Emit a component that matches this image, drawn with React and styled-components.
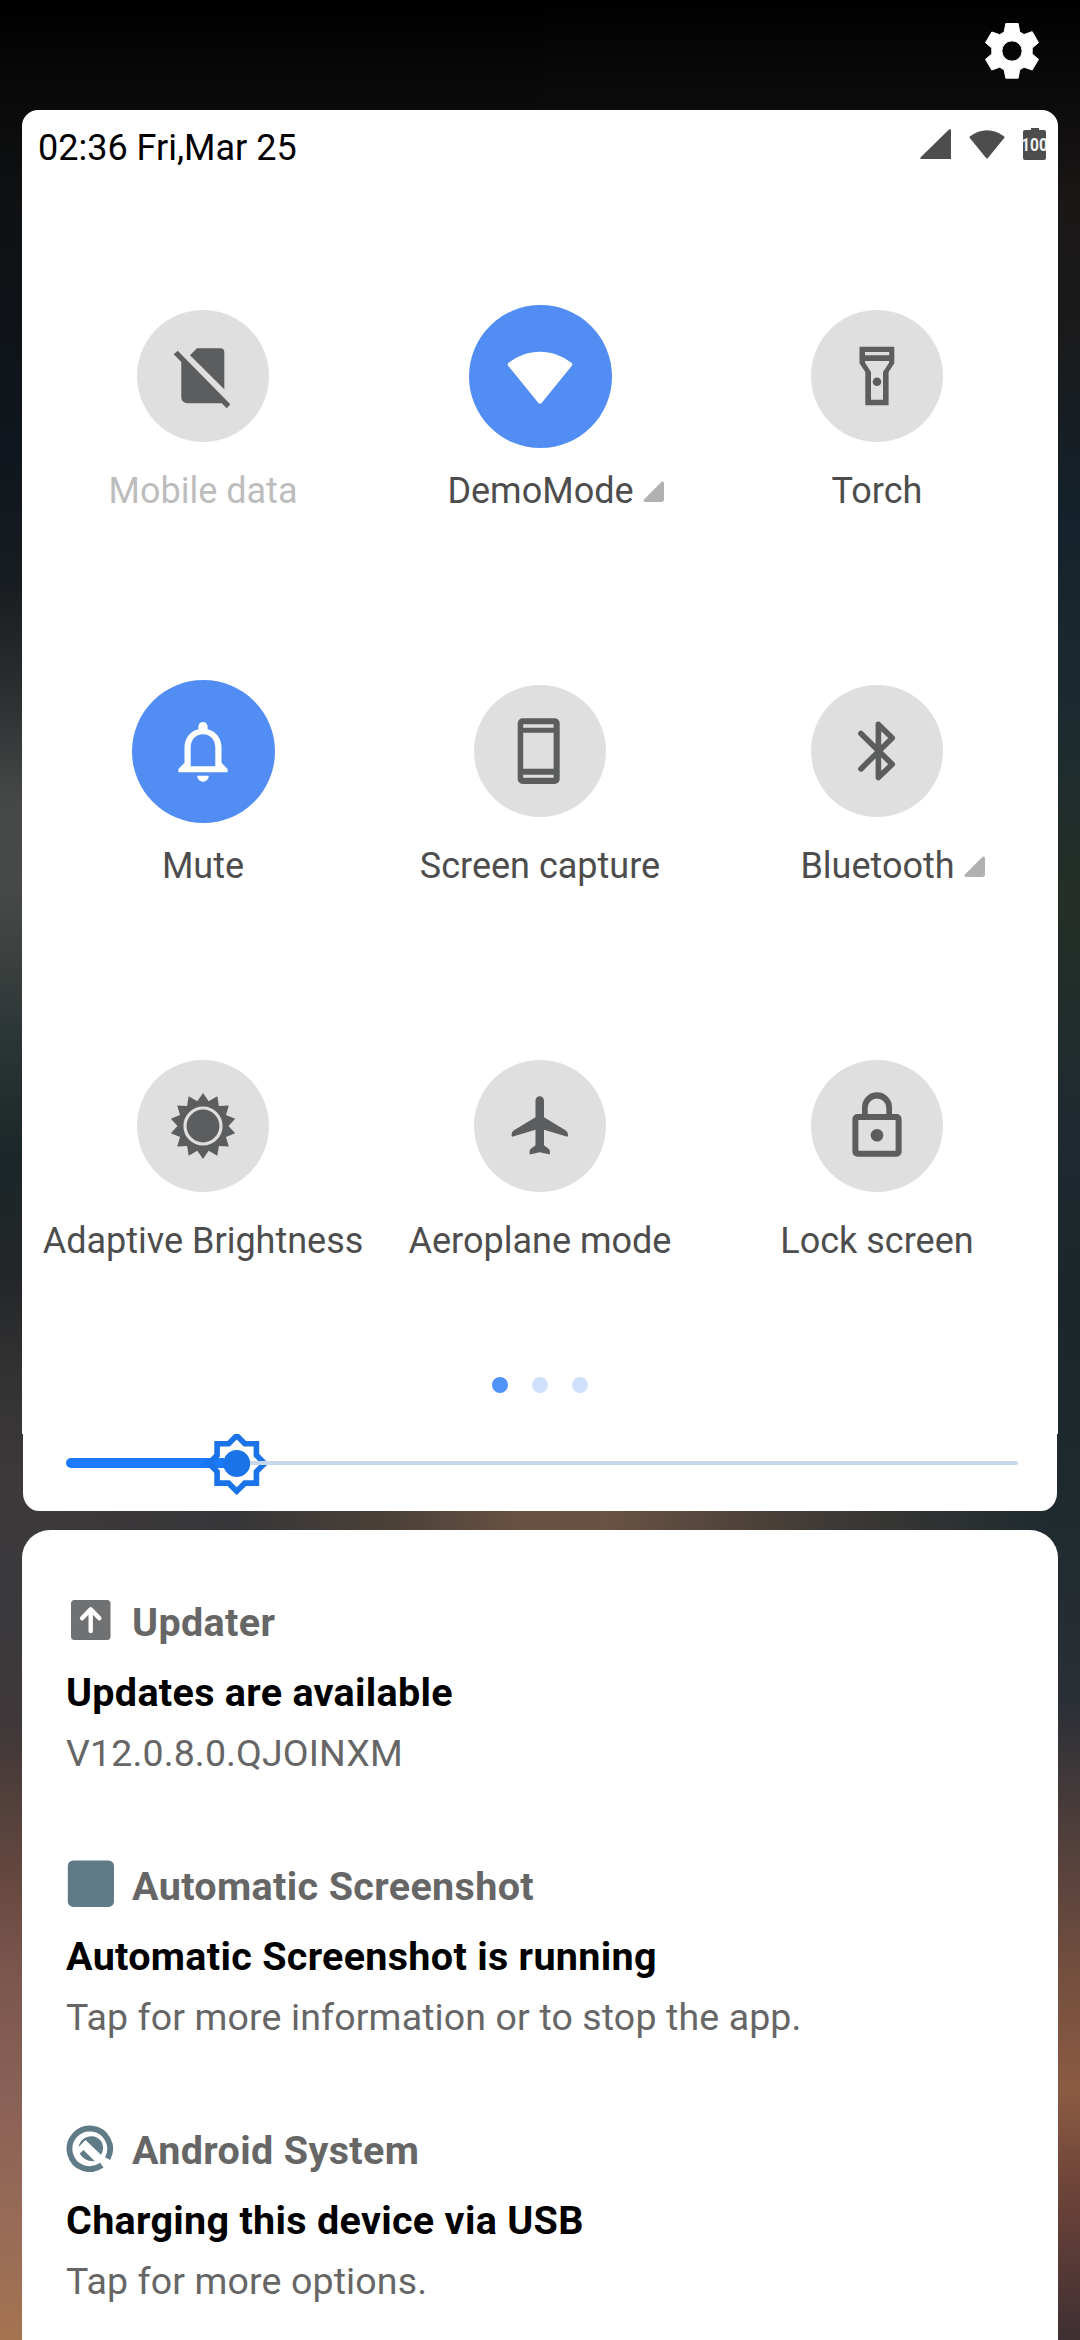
import React from "react";
import styled, { createGlobalStyle } from "styled-components";

const colorSet = {
  blue: "#528df4",
  sliderBlue: "#1a73e8",
  tileGrey: "#dfdfdf",
  iconGrey: "#5c5d5e",
  statusGrey: "#4d4d4d",
  textGrey: "#666666",
  teal: "#5f7b87",
};

// 14 pointed sun, tips at 33 and valleys at 25.5
const sunPoints = Array.from({ length: 28 }, (_, i) => {
  const radius = i % 2 === 0 ? 33 : 25.5;
  const angle = (i * Math.PI) / 14;
  const x = 36 + radius * Math.sin(angle);
  const y = 36 - radius * Math.cos(angle);
  return `${x.toFixed(2)},${y.toFixed(2)}`;
}).join(" ");

const SimOffIcon = () => (
  <>
    <path d="M30 8.3H53.3a4 4 0 0 1 4 4V49.3L23 15.3z" />
    <path d="M6.7 14.3 10.7 10.7 63.3 64.3 59.7 68.3 54.8 63.3H20.3a6 6 0 0 1-6-6V22z" />
  </>
);

const WifiIcon = () => (
  <path d="M37.6 62.9 68 25.6c.6-.9.6-1.8-.3-2.6C58 15.5 47 11.7 36 11.7S14 15.5 4.3 23c-.9.8-.9 1.7-.3 2.6L34.4 62.9c.9 1.1 2.3 1.1 3.2 0z" />
);

const TorchIcon = () => (
  <>
    <path
      fillRule="evenodd"
      d="M18.5 6.7H53.3V23.3L47.6 32V65.3H24.3V32L18.5 23.3zM24 12V15.3H48.2V12zM24 21V22.5L30 32V59.7H42V32L48.2 22.5V21z"
    />
    <circle cx="36" cy="41.7" r="4.3" />
  </>
);

const BellIcon = () => (
  <>
    <path
      fillRule="evenodd"
      d="M36 7a4.6 4.6 0 0 1 4.6 4.6v2.6C49.5 16.5 54.5 23.5 54.5 32.5V47.8L60.6 54V57.3H11.4V54L17.5 47.8V32.5C17.5 23.5 22.5 16.5 31.4 14.2V11.6A4.6 4.6 0 0 1 36 7zM36 19.3C28.5 19.3 23.7 25 23.7 32.5V51.3H48.3V32.5C48.3 25 43.5 19.3 36 19.3z"
    />
    <path d="M30.2 60.7h11.6a5.8 6 0 0 1-11.6 0z" />
  </>
);

const PhoneIcon = () => (
  <path
    fillRule="evenodd"
    d="M18.7 3.3H50.7a5 5 0 0 1 5 5V64a5 5 0 0 1-5 5H18.7a5 5 0 0 1-5-5V8.3a5 5 0 0 1 5-5zM19.2 9.3V12.7H49.6V9.3zM19.2 17.7V53.7H49.6V17.7zM19.2 59.7V62.7H49.6V59.7z"
  />
);

const BluetoothIcon = () => (
  <path
    d="M19.9 18.4 51.2 49.3 37.4 62.6V9.4L51.2 23 19.9 53.9"
    fill="none"
    stroke="currentColor"
    strokeWidth="5.6"
    strokeLinecap="round"
    strokeLinejoin="round"
  />
);

const SunIcon = () => (
  <>
    <polygon points={sunPoints} />
    <circle cx="36" cy="36" r="18" fill="none" stroke={colorSet.tileGrey} strokeWidth="3.2" />
  </>
);

const PlaneIcon = () => (
  <path d="M40 27.3 61.5 40.2C63.3 41.4 64 42.8 64 45.5 64 46.6 63.4 46.8 62.5 46.5L40 39.7V55.3L44.6 58.8C45.6 59.7 45.9 60.5 45.9 62.3V64.5L35.7 62.3 25.6 64.5V62.3C25.6 60.5 25.9 59.7 26.9 58.8L31.5 55.3V39.7L9 46.5C8.1 46.8 7.6 46.6 7.6 45.5 7.6 42.8 8.2 41.4 10 40.2L31.5 27.3V10.5A4.25 4.25 0 0 1 40 10.5z" />
);

const LockIcon = () => (
  <>
    <path
      fillRule="evenodd"
      d="M21 24V17.3a15 15 0 0 1 30 0V24H55.6a5 5 0 0 1 5 5V61.7a5 5 0 0 1-5 5H16.4a5 5 0 0 1-5-5V29a5 5 0 0 1 5-5zM26.7 24H45.3V17.8a9.3 9.3 0 0 0-18.6 0zM17.4 30V60.7H54.6V30z"
    />
    <circle cx="36" cy="45.3" r="6.3" />
  </>
);

const UpdaterIcon = () => (
  <svg width="48" height="48" viewBox="0 0 48 48">
    <rect x="5" y="4" width="39.5" height="40" rx="3.5" fill="#707173" />
    <path
      d="M24.7 35V14M16 22.3 24.7 13.4 33.4 22.3"
      fill="none"
      stroke="#fff"
      strokeWidth="4.4"
      strokeLinecap="round"
      strokeLinejoin="round"
    />
  </svg>
);

const ScreenshotIcon = () => (
  <svg width="48" height="48" viewBox="0 0 48 48">
    <rect x="1.8" y="0.5" width="46.2" height="46.4" rx="5.5" fill={colorSet.teal} />
  </svg>
);

const AndroidIcon = () => (
  <svg width="48" height="48" viewBox="0 0 48 48">
    <path
      d="M35.8 41.2A20.3 20.3 0 1 1 41.6 34.6"
      fill="none"
      stroke={colorSet.teal}
      strokeWidth="5.8"
    />
    <path
      d="M12.6 24.5A12.6 12.6 0 0 1 34.8 16.8C37.8 21.3 37.8 26.5 35 30.8L19.5 15.9z"
      fill={colorSet.teal}
    />
    <path d="M12.6 25.5 19 19.2 34 35.2" fill="none" stroke="#fff" strokeWidth="3.6" />
    <path d="M17.5 26 28.8 37.2C22.5 37.8 16.5 35 13.8 29.6z" fill={colorSet.teal} />
  </svg>
);

const tiles = [
  { label: "Mobile data", Icon: SimOffIcon, disabled: true },
  { label: "DemoMode", Icon: WifiIcon, active: true, expandable: true },
  { label: "Torch", Icon: TorchIcon },
  { label: "Mute", Icon: BellIcon, active: true },
  { label: "Screen capture", Icon: PhoneIcon },
  { label: "Bluetooth", Icon: BluetoothIcon, expandable: true },
  { label: "Adaptive Brightness", Icon: SunIcon },
  { label: "Aeroplane mode", Icon: PlaneIcon },
  { label: "Lock screen", Icon: LockIcon },
];

const notifications = [
  {
    app: "Updater",
    Icon: UpdaterIcon,
    title: "Updates are available",
    text: "V12.0.8.0.QJOINXM",
  },
  {
    app: "Automatic Screenshot",
    Icon: ScreenshotIcon,
    title: "Automatic Screenshot is running",
    text: "Tap for more information or to stop the app.",
  },
  {
    app: "Android System",
    Icon: AndroidIcon,
    title: "Charging this device via USB",
    text: "Tap for more options.",
  },
];

const Tile = ({ item }) => (
  <TileWrapper>
    <CircleSlot>
      <Circle $active={item.active}>
        <svg width="72" height="72" viewBox="0 0 72 72" fill="currentColor">
          <item.Icon />
        </svg>
      </Circle>
    </CircleSlot>
    <TileLabel $disabled={item.disabled}>
      {item.label}
      {item.expandable && (
        <ExpandMark viewBox="0 0 22 22">
          <path d="M19.5.7Q22 .2 22 2.5V19.5Q22 22 19.5 22H2.5Q-.6 21.7 1 19.3z" />
        </ExpandMark>
      )}
    </TileLabel>
  </TileWrapper>
);

const Notification = ({ item }) => (
  <NotificationItem>
    <AppRow>
      <item.Icon />
      <AppName>{item.app}</AppName>
    </AppRow>
    <Title>{item.title}</Title>
    <Text>{item.text}</Text>
  </NotificationItem>
);

const App = () => (
  <Page>
    <GlobalStyle />
    <TopBar>
      <svg width="56" height="56" viewBox="0 0 168 168">
        <path
          fill="#fff"
          stroke="#fff"
          strokeWidth="3"
          strokeLinejoin="round"
          fillRule="evenodd"
          d="M65.5 1.5H102.5L107 27 120 34.5 144.5 26 163.5 59 144.5 75V93L163.5 109 144.5 141 120 132.5 107 140.5 102.5 165.5H65.5L60.5 140.5 47 132.5 23.5 141 4.5 109 23.5 93V75L4.5 59 23.5 27 47 35 60.5 27zM84 53.5A30.5 30.5 0 1 0 84 114.5 30.5 30.5 0 1 0 84 53.5z"
        />
      </svg>
    </TopBar>

    <QuickPanel>
      <StatusRow>
        <Clock>02:36 Fri,Mar 25</Clock>
        <StatusIcons>
          <svg width="31" height="31" viewBox="0 0 31 31">
            <path d="M29 .6Q31 -.4 31 1.6V30H1.5Q-.6 30 .7 28.3z" fill={colorSet.statusGrey} />
          </svg>
          <svg width="36" height="31" viewBox="0 0 36 31">
            <path
              d="M18.7 29.3 35.4 8.7Q36 8 35 7.2 27 1.2 18 1.2T1 7.2Q0 8 .6 8.7L17.3 29.3Q18 30 18.7 29.3z"
              fill={colorSet.statusGrey}
            />
          </svg>
          <Battery>
            <BatteryCap />
            <BatteryBody>
              <BatteryLevel>100</BatteryLevel>
            </BatteryBody>
          </Battery>
        </StatusIcons>
      </StatusRow>

      <TileGrid>
        {tiles.map((item) => (
          <Tile key={item.label} item={item} />
        ))}
      </TileGrid>

      <Pager>
        <Dot $current />
        <Dot />
        <Dot />
      </Pager>
    </QuickPanel>

    <SliderPanel>
      <Filled />
      <Thumb viewBox="0.7 1.54 22.6 21.76">
        <path
          fillRule="evenodd"
          d="M20 8.69V4h-4.69L12 .69 8.69 4H4v4.69L.69 12 4 15.31V20h4.69L12 23.31 15.31 20H20v-4.69L23.31 12 20 8.69zm-2 5.79V18h-3.52L12 20.48 9.52 18H6v-3.52L3.52 12 6 9.52V6h3.52L12 3.52 14.48 6H18v3.52L20.48 12 18 14.48z"
        />
        <circle cx="12" cy="12" r="4.8" />
      </Thumb>
      <Track />
    </SliderPanel>

    <NotificationPanel>
      {notifications.map((item) => (
        <Notification key={item.app} item={item} />
      ))}
    </NotificationPanel>
  </Page>
);

const GlobalStyle = createGlobalStyle`
  body {
    margin: 0;
    background: #000;
  }
`;

// blurred wallpaper: the gap between the panels, then left and right edges
const Page = styled.div`
  width: 1080px;
  height: 2340px;
  overflow: hidden;
  box-sizing: border-box;
  padding: 0 22px;
  display: flex;
  flex-direction: column;
  font-family: Roboto, sans-serif;
  background:
    linear-gradient(
        90deg,
        transparent 2%,
        #373638 22%,
        #4a4038 36%,
        #695142 48%,
        #6a5243 56%,
        #3f3a36 76%,
        transparent 97%
      )
      0 1500px / 100% 40px no-repeat,
    linear-gradient(
        180deg,
        #000 0,
        #0a0a0a 100px,
        #0f1113 200px,
        #0f161d 450px,
        #171c20 580px,
        #2b2e2f 690px,
        #454847 800px,
        #474a49 880px,
        #3c403f 960px,
        #2b3536 1040px,
        #1b2628 1160px,
        #242629 1280px,
        #323232 1370px,
        #3e393a 1480px,
        #3a3a3d 1600px,
        #403839 1730px,
        #66483f 1880px,
        #7a564d 1970px,
        #8a6156 2100px,
        #9a6d57 2250px,
        #a6734f 2340px
      )
      0 0 / 50% 100% no-repeat,
    linear-gradient(
        180deg,
        #000 0,
        #0c0b0b 100px,
        #1a1716 200px,
        #1a1a1b 330px,
        #14222b 520px,
        #1c2a30 700px,
        #252f27 900px,
        #1e2a30 1130px,
        #1a2629 1300px,
        #1e2a2e 1500px,
        #2a2f36 1700px,
        #54403c 1850px,
        #75503f 1980px,
        #8b5a43 2090px,
        #6a4238 2200px,
        #3f2f33 2340px
      )
      100% 0 / 50% 100% no-repeat;
`;

const TopBar = styled.div`
  height: 110px;
  flex-shrink: 0;
  box-sizing: border-box;
  padding: 23px 18px 0 0;
  display: flex;
  justify-content: flex-end;
`;

const QuickPanel = styled.div`
  height: 1324px;
  flex-shrink: 0;
  background: #fff;
  border-radius: 16px 16px 0 0;
`;

const StatusRow = styled.div`
  height: 194px;
  box-sizing: border-box;
  padding: 17px 12px 0 16px;
  display: flex;
  justify-content: space-between;
  align-items: flex-start;
`;

const Clock = styled.span`
  font-size: 36px;
  line-height: 42px;
  color: #000;
`;

const StatusIcons = styled.div`
  display: flex;
  gap: 18px;
  padding-top: 2px;
`;

const Battery = styled.div`
  display: flex;
  flex-direction: column;
  align-items: center;
  width: 23px;
  margin-top: -1px;
`;

const BatteryCap = styled.div`
  width: 8px;
  height: 2px;
  background: ${colorSet.statusGrey};
`;

const BatteryBody = styled.div`
  width: 23px;
  height: 30px;
  overflow: hidden;
  border-radius: 2px;
  background: ${colorSet.statusGrey};
  display: flex;
  justify-content: center;
  align-items: center;
`;

const BatteryLevel = styled.span`
  font-size: 18px;
  line-height: 30px;
  font-weight: 700;
  color: #f2f2f2;
  transform: scaleX(0.86);
`;

const TileGrid = styled.div`
  display: grid;
  grid-template-columns: repeat(3, 337px);
  grid-auto-rows: 208px;
  row-gap: 167px;
  justify-content: center;
`;

const TileWrapper = styled.div`
  display: flex;
  flex-direction: column;
  align-items: center;
`;

const CircleSlot = styled.div`
  height: 144px;
  margin-bottom: 22px;
  display: flex;
  align-items: center;
`;

const Circle = styled.div`
  width: ${(props) => (props.$active ? 143 : 132)}px;
  height: ${(props) => (props.$active ? 143 : 132)}px;
  border-radius: 50%;
  display: flex;
  justify-content: center;
  align-items: center;
  color: ${(props) => (props.$active ? "#fff" : colorSet.iconGrey)};
  background: ${(props) => (props.$active ? colorSet.blue : colorSet.tileGrey)};
`;

const TileLabel = styled.div`
  display: flex;
  align-items: center;
  font-size: 36px;
  line-height: 42px;
  white-space: nowrap;
  color: ${(props) => (props.$disabled ? "#bdbdbd" : "#4d4d4d")};
`;

const ExpandMark = styled.svg`
  width: 21px;
  height: 21px;
  margin: 0 -31px 0 9px;
  fill: #b1b1b1;
`;

const Pager = styled.div`
  display: flex;
  justify-content: center;
  gap: 24px;
  margin-top: 115px;
`;

const Dot = styled.span`
  width: 16px;
  height: 16px;
  border-radius: 50%;
  background: ${(props) => (props.$current ? "#5093f8" : "#cfe1fc")};
`;

const SliderPanel = styled.div`
  height: 77px;
  flex-shrink: 0;
  box-sizing: border-box;
  margin: 0 1px 19px;
  padding: 0 39px 0 43px;
  display: flex;
  align-items: flex-start;
  background: #fff;
  border-radius: 0 0 16px 16px / 0 0 18px 18px;
`;

const Filled = styled.div`
  width: 158px;
  height: 10px;
  margin: 24px -19px 0 0;
  border-radius: 5px 0 0 5px;
  background: #1a7afa;
`;

const Thumb = styled.svg`
  width: 63.5px;
  height: 61.2px;
  flex-shrink: 0;
  fill: ${colorSet.sliderBlue};
`;

const Track = styled.div`
  flex: 1;
  height: 4px;
  margin: 27px 0 0 -19px;
  border-radius: 0 2px 2px 0;
  background: #c6d8ea;
`;

const NotificationPanel = styled.div`
  flex: 1;
  padding: 69px 44px 0;
  background: #fff;
  border-radius: 28px 28px 0 0;
`;

const NotificationItem = styled.div`
  margin-bottom: 86px;
`;

const AppRow = styled.div`
  display: flex;
  align-items: center;
  gap: 18px;
  height: 48px;
  margin-bottom: 22px;

  svg {
    margin-bottom: 6px;
  }
`;

const AppName = styled.span`
  font-size: 39.5px;
  line-height: 48px;
  font-weight: 700;
  letter-spacing: 0.35px;
  color: ${colorSet.textGrey};
`;

const Title = styled.div`
  font-size: 39.5px;
  line-height: 48px;
  font-weight: 700;
  letter-spacing: 0.3px;
  color: #000;
  margin-bottom: 12px;
`;

const Text = styled.div`
  font-size: 37.5px;
  line-height: 48px;
  letter-spacing: 0.13px;
  color: ${colorSet.textGrey};
`;

export default App;
